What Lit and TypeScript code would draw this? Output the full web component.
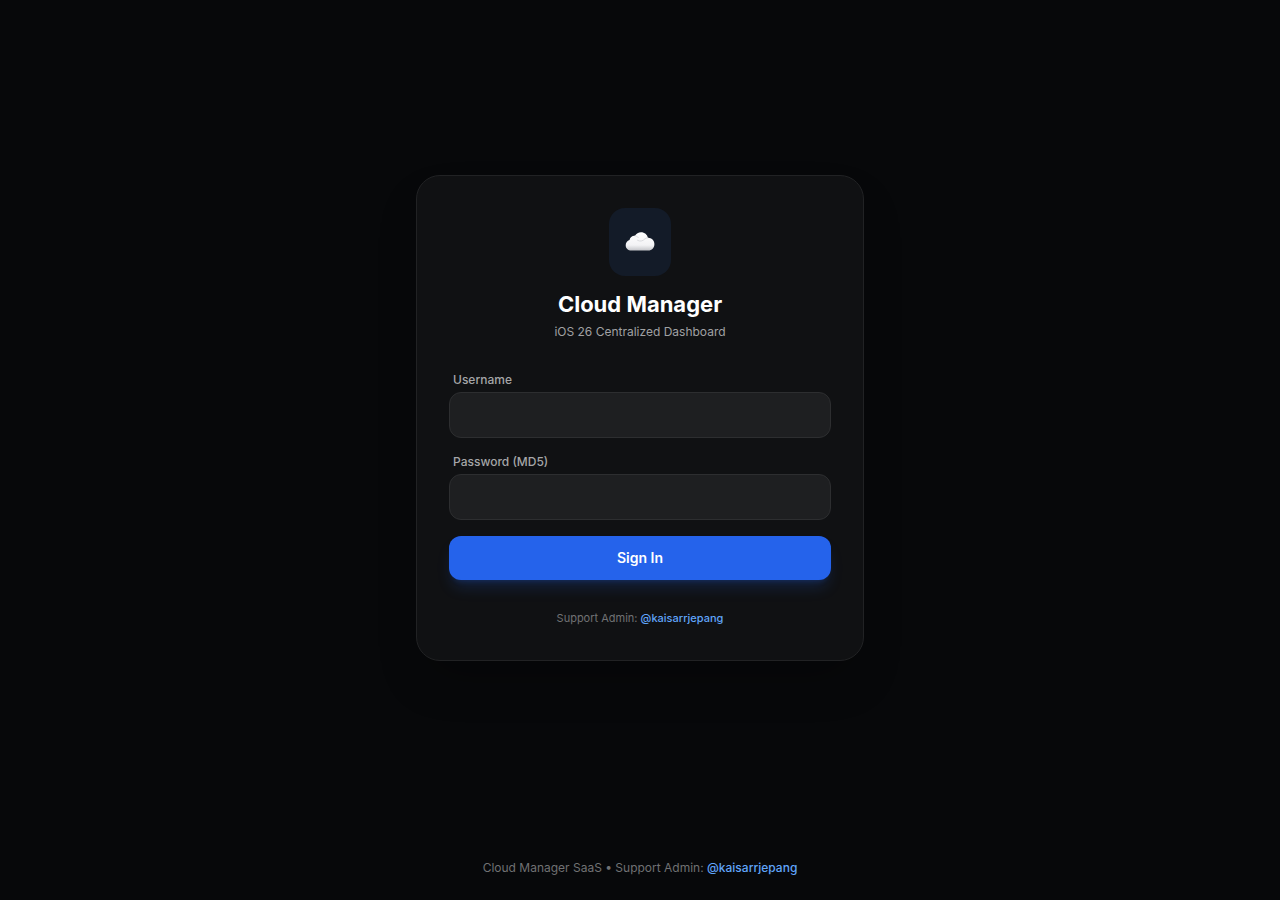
import { LitElement, html, css, svg } from "lit";
import { customElement } from "lit/decorators.js";

const cloud = svg`
  <defs>
    <linearGradient id="body" x1="0" y1="0" x2="0" y2="1">
      <stop offset="0" stop-color="#ffffff" />
      <stop offset="0.7" stop-color="#f3f3f5" />
      <stop offset="1" stop-color="#c4c5c9" />
    </linearGradient>
  </defs>
  <path fill="url(#body)" d="M6.500 26.600C3 26.600.7 24.500.7 21.300c0-2.700 1.500-4.600 3.800-5.300C5 13.300 7.200 11.600 10 11.800c1.400-2.300 3.400-3.600 6-3.600 3.600 0 6.300 2.300 6.900 5.600 3.700.1 6.500 2.700 6.500 6.300 0 3.900-2.500 6.500-6.100 6.500z" />
  <path fill="none" stroke="#d3d4d8" stroke-width="0.800" stroke-linecap="round" d="M10 11.800c1.400.1 2.500.7 3.200 1.700M12.500 16.300c2.300 1.400 5.200 1 7-1M20 14.800c.8-.6 1.800-1 2.900-1" />
`;

@customElement("app-root")
export class AppRoot extends LitElement {
  static styles = css`
    :host {
      display: flex;
      flex-direction: column;
      min-height: 100vh;
      box-sizing: border-box;
      background: #07080a;
      color: #ffffff;
      font-family: Inter, Roboto, sans-serif;
      font-size: 12px;
      line-height: 16px;
    }
    *,
    *::before,
    *::after {
      box-sizing: border-box;
    }
    .main {
      flex: 1;
      display: flex;
      align-items: center;
      justify-content: center;
      padding: 16px;
    }
    .card {
      width: 100%;
      max-width: 448px;
      padding: 32px;
      border: 1px solid #212224;
      border-radius: 24px;
      background: #101113;
      box-shadow: 0 24px 48px -12px rgba(0, 0, 0, 0.3);
    }
    .head {
      display: flex;
      flex-direction: column;
      align-items: center;
      margin-bottom: 32px;
      text-align: center;
    }
    .badge {
      display: flex;
      padding: 16px;
      margin-bottom: 12px;
      border-radius: 16px;
      background: #131b28;
    }
    .cloud {
      display: block;
      width: 30px;
      height: 36px;
    }
    .title {
      margin: 0;
      font-size: 22px;
      line-height: 32px;
      font-weight: 700;
    }
    .sub {
      margin: 4px 0 0;
      color: #a0a1a3;
    }
    .form {
      display: flex;
      flex-direction: column;
      gap: 16px;
    }
    .field {
      display: flex;
      flex-direction: column;
      gap: 4px;
    }
    .label {
      padding-left: 4px;
      font-weight: 500;
      color: #a5a6a8;
    }
    .input {
      width: 100%;
      height: 46px;
      padding: 12px 16px;
      border: 1px solid #2d2e30;
      border-radius: 12px;
      background: #1e1f21;
      color: inherit;
      font: inherit;
      font-size: 14px;
      outline: none;
    }
    .input:focus {
      border-color: #2563eb;
    }
    .submit {
      height: 44px;
      border: 0;
      border-radius: 12px;
      background: #2563eb;
      color: #ffffff;
      font: inherit;
      font-size: 14px;
      line-height: 20px;
      font-weight: 600;
      cursor: pointer;
      box-shadow:
        0 10px 15px -3px rgba(37, 99, 235, 0.2),
        0 4px 6px -4px rgba(37, 99, 235, 0.3);
    }
    .support {
      margin: 28px 0 0;
      font-size: 11px;
      line-height: 20px;
      text-align: center;
      color: #707173;
    }
    .footer {
      padding: 24px;
      text-align: center;
      color: #707173;
    }
    .link {
      color: #60a5fa;
      font-weight: 500;
      text-decoration: none;
    }
  `;

  render() {
    return html`
      <main class="main">
        <section class="card">
          <header class="head">
            <div class="badge">
              <svg class="cloud" viewBox="0 0 30 36" aria-hidden="true">${cloud}</svg>
            </div>
            <h1 class="title">Cloud Manager</h1>
            <p class="sub">iOS 26 Centralized Dashboard</p>
          </header>
          <form class="form" @submit=${(e: Event) => e.preventDefault()}>
            <div class="field">
              <label class="label" for="username">Username</label>
              <input class="input" id="username" type="text" autocomplete="username" />
            </div>
            <div class="field">
              <label class="label" for="password">Password (MD5)</label>
              <input class="input" id="password" type="password" autocomplete="current-password" />
            </div>
            <button class="submit" type="submit">Sign In</button>
          </form>
          <p class="support">Support Admin: <a class="link" href="#">@kaisarrjepang</a></p>
        </section>
      </main>
      <footer class="footer">
        Cloud Manager SaaS • Support Admin: <a class="link" href="#">@kaisarrjepang</a>
      </footer>
    `;
  }
}
